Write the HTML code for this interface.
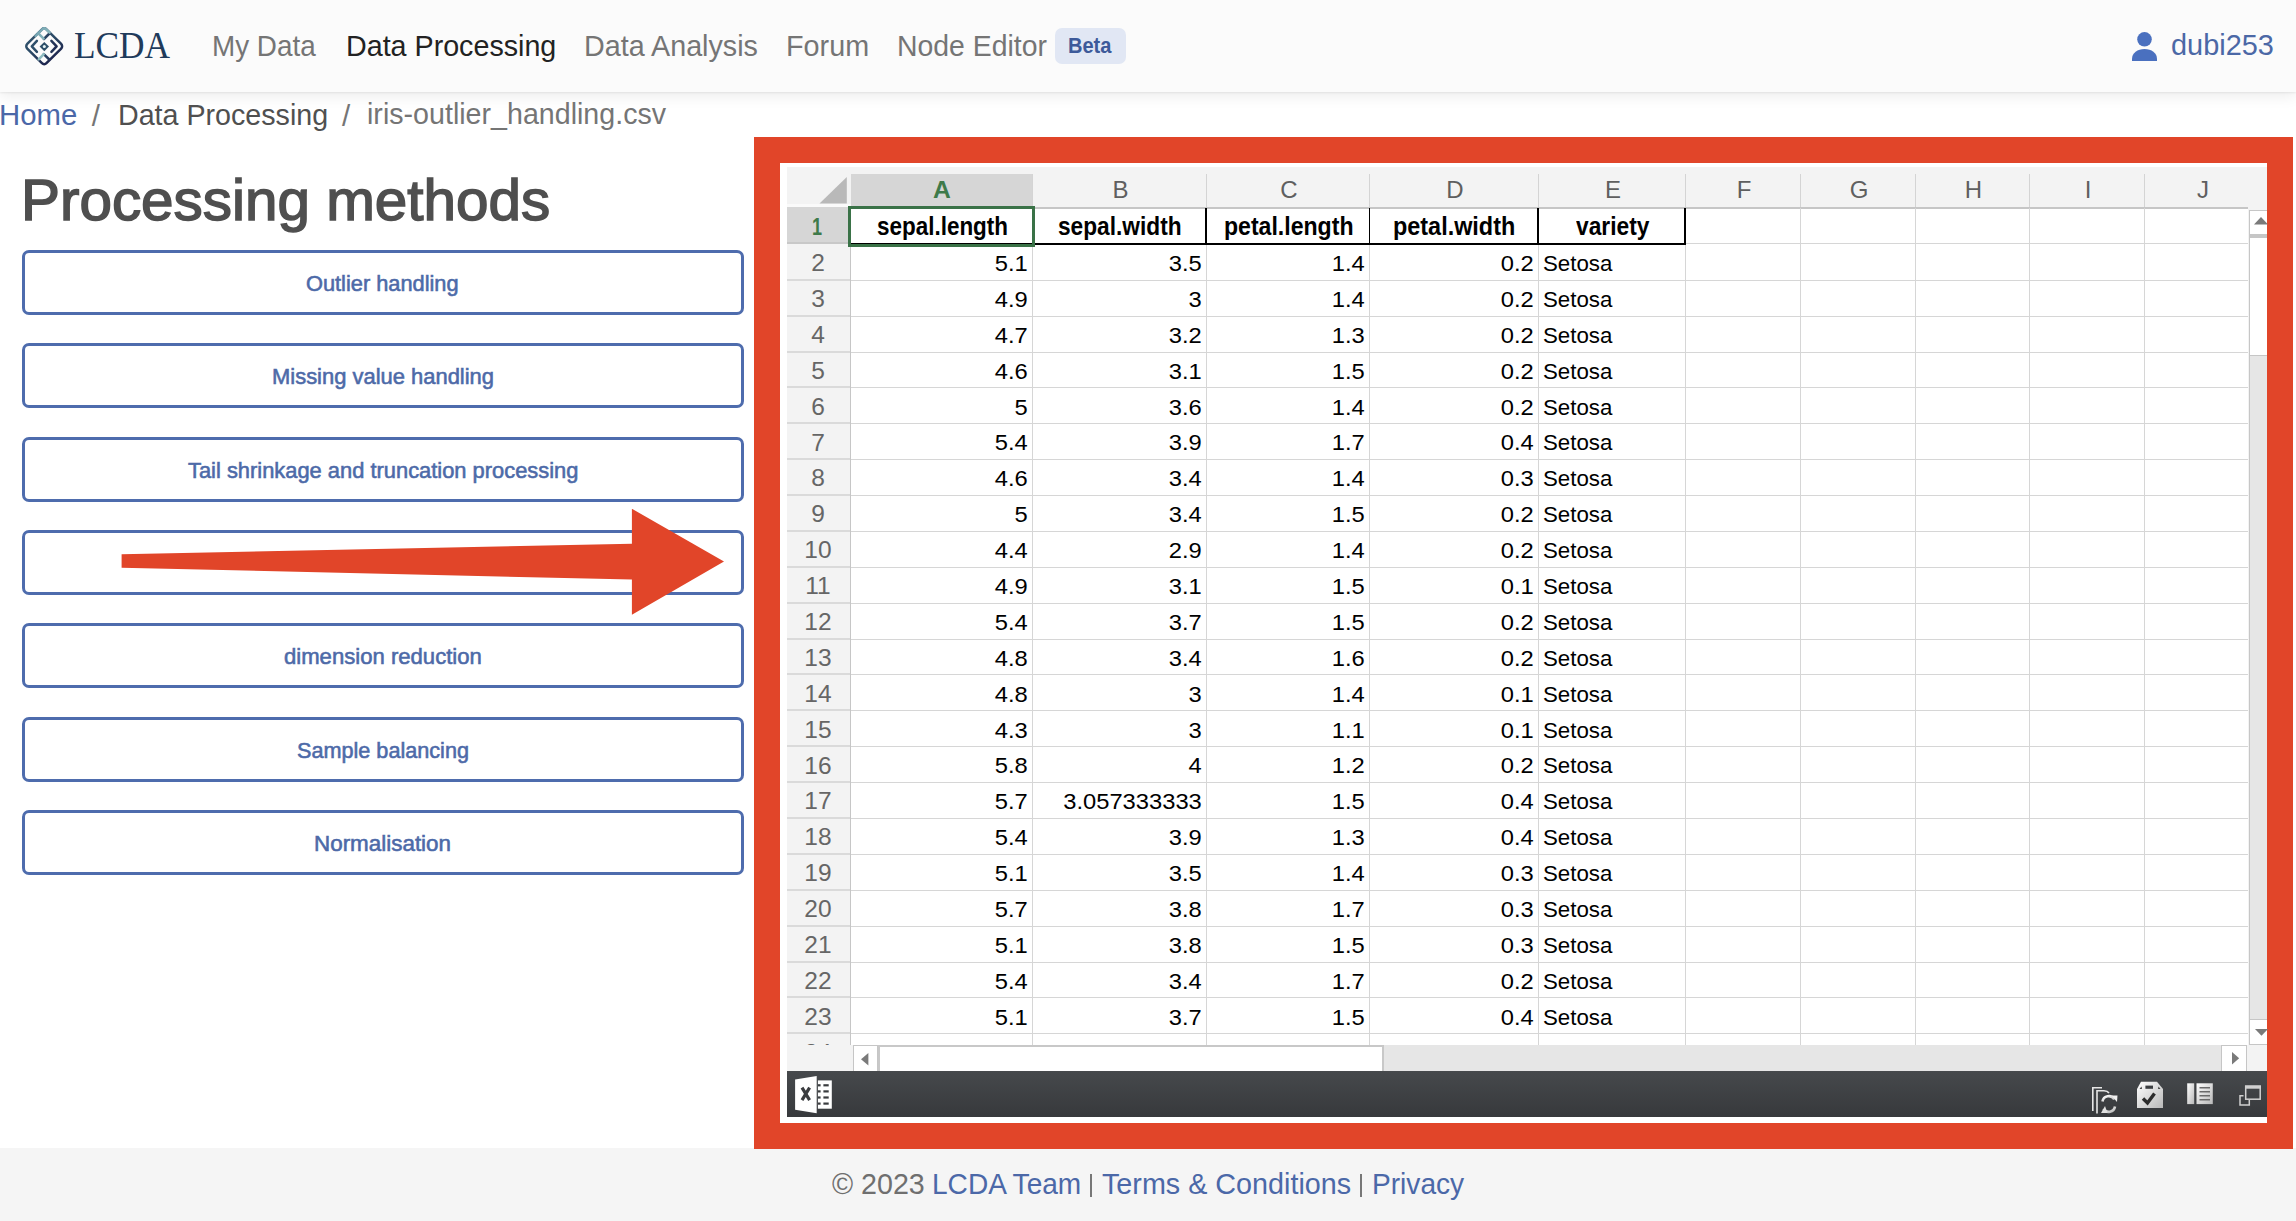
<!DOCTYPE html><html><head><meta charset="utf-8"><style>
*{margin:0;padding:0;box-sizing:border-box}
html,body{width:2296px;height:1221px;overflow:hidden;background:#fff;font-family:"Liberation Sans",sans-serif}
.abs{position:absolute}
.t{position:absolute;white-space:nowrap;line-height:1}
.btn{position:absolute;left:22px;width:721.5px;height:65px;border:3.2px solid #4e6cad;border-radius:7px;background:#fff}
.gl{position:absolute;background:#dcdcdc}
.c{position:absolute;font-size:22.4px;color:#000;line-height:1;white-space:nowrap;text-align:right;transform:scaleX(1.06);transform-origin:100% 0}
.rn{position:absolute;left:786.5px;width:63px;text-align:center;font-size:24.5px;color:#666;line-height:1}
.ch{position:absolute;text-align:center;font-size:24px;color:#5f5f5f;line-height:1}
</style></head><body>
<div class="abs" style="left:0;top:0;width:2296px;height:92px;background:#fbfbfb;box-shadow:0 1px 2px rgba(0,0,0,.07),0 4px 14px rgba(0,0,0,.08)"></div>
<svg class="abs" style="left:20px;top:22px" width="50" height="48" viewBox="0 0 50 48">
<defs><linearGradient id="lg" gradientUnits="userSpaceOnUse" x1="4" y1="20" x2="44" y2="28"><stop offset="0" stop-color="#34566f"/><stop offset="0.45" stop-color="#2b4a66"/><stop offset="1" stop-color="#1a1c48"/></linearGradient>
<linearGradient id="lt" gradientUnits="userSpaceOnUse" x1="14" y1="8" x2="30" y2="16"><stop offset="0" stop-color="#6f9fae"/><stop offset="1" stop-color="#8ebcc0"/></linearGradient></defs>
<g fill="none" stroke="url(#lg)" stroke-width="2.5" stroke-linejoin="round" stroke-linecap="round">
<rect x="10.6" y="10.65" width="27.2" height="27.2" rx="3.2" transform="rotate(45 24.2 24.25)"/>
<path d="M23.9 17 L29.9 11"/>
<path d="M23.8 32.2 L29.3 37.5"/>
<path d="M16.9 18.9 L11.8 24.4 L16.9 29.9"/><path d="M31.4 18.9 L36.6 24.4 L31.4 29.9"/>
</g>
<g fill="none" stroke="url(#lt)" stroke-width="2.5" stroke-linecap="round">
<path d="M15.5 13.8 L22.2 7.3 Q24.2 5.3 26.2 7.3 L29.6 10.7"/>
<path d="M18.1 11.2 L23.6 16.7"/>
<path d="M18.7 37.4 L23.8 32.2"/>
</g>
<path d="M24.3 19.9 L29 24.6 L24.3 29.3 L19.6 24.6 Z" fill="#2e5069"/>
<circle cx="24.3" cy="24.6" r="1.5" fill="#e8f6f8"/>
</svg>
<div class="t" style="left:74.24px;top:27.24px;font-family:'Liberation Serif';font-weight:400;font-size:37.58px;color:#1f3b5b;transform:scaleX(0.9394);transform-origin:0 0;">LCDA</div>
<div class="t" style="left:212.37px;top:30.53px;font-family:'Liberation Sans';font-weight:400;font-size:29.50px;color:#757575;transform:scaleX(0.9434);transform-origin:0 0;">My Data</div>
<div class="t" style="left:345.81px;top:30.53px;font-family:'Liberation Sans';font-weight:400;font-size:29.50px;color:#222;transform:scaleX(0.9717);transform-origin:0 0;">Data Processing</div>
<div class="t" style="left:583.80px;top:30.63px;font-family:'Liberation Sans';font-weight:400;font-size:29.50px;color:#757575;transform:scaleX(0.9730);transform-origin:0 0;">Data Analysis</div>
<div class="t" style="left:786.30px;top:30.63px;font-family:'Liberation Sans';font-weight:400;font-size:29.50px;color:#757575;transform:scaleX(0.9749);transform-origin:0 0;">Forum</div>
<div class="t" style="left:897.03px;top:30.53px;font-family:'Liberation Sans';font-weight:400;font-size:29.50px;color:#757575;transform:scaleX(0.9620);transform-origin:0 0;">Node Editor</div>
<div class="abs" style="left:1055px;top:28px;width:71px;height:36px;background:#e1e7f4;border-radius:7px"></div>
<div class="t" style="left:1068.10px;top:35.41px;font-family:'Liberation Sans';font-weight:700;font-size:21.16px;color:#3d5a9a;transform:scaleX(0.9475);transform-origin:0 0;">Beta</div>
<svg class="abs" style="left:2131px;top:31px" width="27" height="31" viewBox="0 0 27 31">
<circle cx="13.5" cy="8.3" r="7.3" fill="#4a70bf"/><path d="M1 29.9 L1 28 C1 22 6.5 18.1 13.5 18.1 C20.5 18.1 26 22 26 28 L26 29.9 Z" fill="#4a70bf"/></svg>
<div class="t" style="left:2171.44px;top:31.19px;font-family:'Liberation Sans';font-weight:400;font-size:28.60px;color:#4b68a6;transform:scaleX(1.0107);transform-origin:0 0;">dubi253</div>
<div class="t" style="left:-0.55px;top:99.52px;font-family:'Liberation Sans';font-weight:400;font-size:29.50px;color:#4b68a8;transform:scaleX(0.9943);transform-origin:0 0;">Home</div>
<div class="t" style="left:91.80px;top:101.02px;font-family:'Liberation Sans';font-weight:400;font-size:29.50px;color:#757575;">/</div>
<div class="t" style="left:117.61px;top:99.52px;font-family:'Liberation Sans';font-weight:400;font-size:29.50px;color:#505050;transform:scaleX(0.9707);transform-origin:0 0;">Data Processing</div>
<div class="t" style="left:341.90px;top:101.02px;font-family:'Liberation Sans';font-weight:400;font-size:29.50px;color:#757575;">/</div>
<div class="t" style="left:367.30px;top:98.92px;font-family:'Liberation Sans';font-weight:400;font-size:29.50px;color:#757575;transform:scaleX(0.9702);transform-origin:0 0;">iris-outlier_handling.csv</div>
<div class="t" style="left:21.03px;top:171.71px;font-family:'Liberation Sans';font-weight:400;font-size:57.40px;color:#4f4f4f;transform:scaleX(1.0178);transform-origin:0 0;-webkit-text-stroke:1.5px #4f4f4f">Processing methods</div>
<div class="btn" style="top:250.00px"></div>
<div class="t" style="left:306.31px;top:273.08px;font-family:'Liberation Sans';font-weight:400;font-size:21.20px;color:#4d6aa8;transform:scaleX(1.0283);transform-origin:0 0;-webkit-text-stroke:0.55px #4d6aa8">Outlier handling</div>
<div class="btn" style="top:343.33px"></div>
<div class="t" style="left:271.84px;top:366.48px;font-family:'Liberation Sans';font-weight:400;font-size:21.20px;color:#4d6aa8;transform:scaleX(1.0357);transform-origin:0 0;-webkit-text-stroke:0.55px #4d6aa8">Missing value handling</div>
<div class="btn" style="top:436.67px"></div>
<div class="t" style="left:187.76px;top:460.38px;font-family:'Liberation Sans';font-weight:400;font-size:21.20px;color:#4d6aa8;transform:scaleX(1.0326);transform-origin:0 0;-webkit-text-stroke:0.55px #4d6aa8">Tail shrinkage and truncation processing</div>
<div class="btn" style="top:530.00px"></div>
<div class="btn" style="top:623.33px"></div>
<div class="t" style="left:284.12px;top:646.48px;font-family:'Liberation Sans';font-weight:400;font-size:21.20px;color:#4d6aa8;transform:scaleX(1.0432);transform-origin:0 0;-webkit-text-stroke:0.55px #4d6aa8">dimension reduction</div>
<div class="btn" style="top:716.66px"></div>
<div class="t" style="left:296.82px;top:740.08px;font-family:'Liberation Sans';font-weight:400;font-size:21.20px;color:#4d6aa8;transform:scaleX(1.0211);transform-origin:0 0;-webkit-text-stroke:0.55px #4d6aa8">Sample balancing</div>
<div class="btn" style="top:810.00px"></div>
<div class="t" style="left:314.31px;top:833.08px;font-family:'Liberation Sans';font-weight:400;font-size:21.20px;color:#4d6aa8;transform:scaleX(1.0580);transform-origin:0 0;-webkit-text-stroke:0.55px #4d6aa8">Normalisation</div>
<svg class="abs" style="left:0;top:0" width="760" height="700"><polygon fill="#e14529" points="121.6,554.2 631.9,543.8 631.9,508.8 724,561.5 631.9,614.8 631.9,579.6 121.6,567.7"/></svg>
<div class="abs" style="left:0;top:1148px;width:2296px;height:73px;background:#f5f5f5"></div>
<div class="t" style="left:831.53px;top:1168.70px;font-family:'Liberation Sans';font-weight:400;font-size:30.00px;color:#6f6f6f;transform:scaleX(0.9548);transform-origin:0 0;">© 2023</div>
<div class="t" style="left:931.75px;top:1168.70px;font-family:'Liberation Sans';font-weight:400;font-size:30.00px;color:#4b68a8;transform:scaleX(0.9355);transform-origin:0 0;">LCDA Team</div>
<div class="abs" style="left:1089.6px;top:1173.5px;width:2.4px;height:23.5px;background:#777"></div>
<div class="t" style="left:1102.03px;top:1168.70px;font-family:'Liberation Sans';font-weight:400;font-size:30.00px;color:#4b68a8;transform:scaleX(0.9578);transform-origin:0 0;">Terms &amp; Conditions</div>
<div class="abs" style="left:1360.1px;top:1173.5px;width:2.4px;height:23.5px;background:#777"></div>
<div class="t" style="left:1372.15px;top:1168.70px;font-family:'Liberation Sans';font-weight:400;font-size:30.00px;color:#4b68a8;transform:scaleX(0.9373);transform-origin:0 0;">Privacy</div>
<div class="abs" style="left:754px;top:136.5px;width:1539px;height:1012.5px;border:26px solid #e14529;background:#fff"></div>
<div class="abs" style="left:786.5px;top:167px;width:1480px;height:904px;background:#f3f3f3"></div>
<div class="abs" style="left:850.5px;top:208px;width:1397.5px;height:837px;background:#fff"></div>
<svg class="abs" style="left:786px;top:167px" width="64" height="41"><polygon fill="#b9b9b9" points="33.5,36.4 60.8,10 60.8,36.4"/></svg>
<div class="abs" style="left:850.5px;top:174px;width:182px;height:34px;background:#d6d6d6"></div>
<div class="t" style="left:933.46px;top:177.43px;font-family:'Liberation Sans';font-weight:700;font-size:24.20px;color:#3e7a4a;transform:scaleX(1.0204);transform-origin:0 0;margin-top:1px">A</div>
<div class="ch" style="left:1033.5px;width:174.0px;top:177.5px">B</div>
<div class="abs" style="left:1031.9px;top:174px;width:1.2px;height:34px;background:#d4d4d4"></div>
<div class="ch" style="left:1207.5px;width:163.0px;top:177.5px">C</div>
<div class="abs" style="left:1205.9px;top:174px;width:1.2px;height:34px;background:#d4d4d4"></div>
<div class="ch" style="left:1370.5px;width:169.0px;top:177.5px">D</div>
<div class="abs" style="left:1368.9px;top:174px;width:1.2px;height:34px;background:#d4d4d4"></div>
<div class="ch" style="left:1539.5px;width:147.0px;top:177.5px">E</div>
<div class="abs" style="left:1537.9px;top:174px;width:1.2px;height:34px;background:#d4d4d4"></div>
<div class="ch" style="left:1686.5px;width:115.0px;top:177.5px">F</div>
<div class="abs" style="left:1684.9px;top:174px;width:1.2px;height:34px;background:#d4d4d4"></div>
<div class="ch" style="left:1801.5px;width:115.0px;top:177.5px">G</div>
<div class="abs" style="left:1799.9px;top:174px;width:1.2px;height:34px;background:#d4d4d4"></div>
<div class="ch" style="left:1916.5px;width:114.0px;top:177.5px">H</div>
<div class="abs" style="left:1914.9px;top:174px;width:1.2px;height:34px;background:#d4d4d4"></div>
<div class="ch" style="left:2030.5px;width:115.0px;top:177.5px">I</div>
<div class="abs" style="left:2028.9px;top:174px;width:1.2px;height:34px;background:#d4d4d4"></div>
<div class="ch" style="left:2145.5px;width:115.0px;top:177.5px">J</div>
<div class="abs" style="left:2143.9px;top:174px;width:1.2px;height:34px;background:#d4d4d4"></div>
<div class="abs" style="left:850.5px;top:207px;width:1397.5px;height:2px;background:#c6c6c6"></div>
<div class="abs" style="left:786.5px;top:204.3px;width:64px;height:2.6px;background:#fafafa"></div>
<div class="abs" style="left:849.5px;top:208px;width:1.6px;height:837px;background:#c6c6c6"></div>
<div class="abs" style="left:786.5px;top:206.9px;width:63px;height:36.5px;background:#d6d6d6"></div>
<div class="t" style="left:811.71px;top:214.33px;font-family:'Liberation Sans';font-weight:700;font-size:24.20px;color:#3e7a4a;transform:scaleX(0.7472);transform-origin:0 0;margin-top:1px">1</div>
<div class="abs" style="left:786.5px;top:242.4px;width:63px;height:1.8px;background:#c8c8c8"></div>
<div class="gl" style="left:850.5px;top:243px;width:1397.5px;height:1px;background:#d6d6d6"></div>
<div class="gl" style="left:850.5px;top:280px;width:1397.5px;height:1px;background:#d6d6d6"></div>
<div class="gl" style="left:786.5px;top:279.4px;width:63px;height:1.5px;background:#dadada"></div>
<div class="gl" style="left:850.5px;top:316px;width:1397.5px;height:1px;background:#d6d6d6"></div>
<div class="gl" style="left:786.5px;top:315.4px;width:63px;height:1.5px;background:#dadada"></div>
<div class="gl" style="left:850.5px;top:352px;width:1397.5px;height:1px;background:#d6d6d6"></div>
<div class="gl" style="left:786.5px;top:351.4px;width:63px;height:1.5px;background:#dadada"></div>
<div class="gl" style="left:850.5px;top:387px;width:1397.5px;height:1px;background:#d6d6d6"></div>
<div class="gl" style="left:786.5px;top:386.4px;width:63px;height:1.5px;background:#dadada"></div>
<div class="gl" style="left:850.5px;top:423px;width:1397.5px;height:1px;background:#d6d6d6"></div>
<div class="gl" style="left:786.5px;top:422.4px;width:63px;height:1.5px;background:#dadada"></div>
<div class="gl" style="left:850.5px;top:459px;width:1397.5px;height:1px;background:#d6d6d6"></div>
<div class="gl" style="left:786.5px;top:458.4px;width:63px;height:1.5px;background:#dadada"></div>
<div class="gl" style="left:850.5px;top:495px;width:1397.5px;height:1px;background:#d6d6d6"></div>
<div class="gl" style="left:786.5px;top:494.4px;width:63px;height:1.5px;background:#dadada"></div>
<div class="gl" style="left:850.5px;top:531px;width:1397.5px;height:1px;background:#d6d6d6"></div>
<div class="gl" style="left:786.5px;top:530.4px;width:63px;height:1.5px;background:#dadada"></div>
<div class="gl" style="left:850.5px;top:567px;width:1397.5px;height:1px;background:#d6d6d6"></div>
<div class="gl" style="left:786.5px;top:566.4px;width:63px;height:1.5px;background:#dadada"></div>
<div class="gl" style="left:850.5px;top:603px;width:1397.5px;height:1px;background:#d6d6d6"></div>
<div class="gl" style="left:786.5px;top:602.4px;width:63px;height:1.5px;background:#dadada"></div>
<div class="gl" style="left:850.5px;top:639px;width:1397.5px;height:1px;background:#d6d6d6"></div>
<div class="gl" style="left:786.5px;top:638.4px;width:63px;height:1.5px;background:#dadada"></div>
<div class="gl" style="left:850.5px;top:674px;width:1397.5px;height:1px;background:#d6d6d6"></div>
<div class="gl" style="left:786.5px;top:673.4px;width:63px;height:1.5px;background:#dadada"></div>
<div class="gl" style="left:850.5px;top:710px;width:1397.5px;height:1px;background:#d6d6d6"></div>
<div class="gl" style="left:786.5px;top:709.4px;width:63px;height:1.5px;background:#dadada"></div>
<div class="gl" style="left:850.5px;top:746px;width:1397.5px;height:1px;background:#d6d6d6"></div>
<div class="gl" style="left:786.5px;top:745.4px;width:63px;height:1.5px;background:#dadada"></div>
<div class="gl" style="left:850.5px;top:782px;width:1397.5px;height:1px;background:#d6d6d6"></div>
<div class="gl" style="left:786.5px;top:781.4px;width:63px;height:1.5px;background:#dadada"></div>
<div class="gl" style="left:850.5px;top:818px;width:1397.5px;height:1px;background:#d6d6d6"></div>
<div class="gl" style="left:786.5px;top:817.4px;width:63px;height:1.5px;background:#dadada"></div>
<div class="gl" style="left:850.5px;top:854px;width:1397.5px;height:1px;background:#d6d6d6"></div>
<div class="gl" style="left:786.5px;top:853.4px;width:63px;height:1.5px;background:#dadada"></div>
<div class="gl" style="left:850.5px;top:890px;width:1397.5px;height:1px;background:#d6d6d6"></div>
<div class="gl" style="left:786.5px;top:889.4px;width:63px;height:1.5px;background:#dadada"></div>
<div class="gl" style="left:850.5px;top:926px;width:1397.5px;height:1px;background:#d6d6d6"></div>
<div class="gl" style="left:786.5px;top:925.4px;width:63px;height:1.5px;background:#dadada"></div>
<div class="gl" style="left:850.5px;top:962px;width:1397.5px;height:1px;background:#d6d6d6"></div>
<div class="gl" style="left:786.5px;top:961.4px;width:63px;height:1.5px;background:#dadada"></div>
<div class="gl" style="left:850.5px;top:997px;width:1397.5px;height:1px;background:#d6d6d6"></div>
<div class="gl" style="left:786.5px;top:996.4px;width:63px;height:1.5px;background:#dadada"></div>
<div class="gl" style="left:850.5px;top:1033px;width:1397.5px;height:1px;background:#d6d6d6"></div>
<div class="gl" style="left:786.5px;top:1032.4px;width:63px;height:1.5px;background:#dadada"></div>
<div class="gl" style="left:1032px;top:208px;width:1px;height:837px;background:#d6d6d6"></div>
<div class="gl" style="left:1206px;top:208px;width:1px;height:837px;background:#d6d6d6"></div>
<div class="gl" style="left:1369px;top:208px;width:1px;height:837px;background:#d6d6d6"></div>
<div class="gl" style="left:1538px;top:208px;width:1px;height:837px;background:#d6d6d6"></div>
<div class="gl" style="left:1685px;top:208px;width:1px;height:837px;background:#d6d6d6"></div>
<div class="gl" style="left:1800px;top:208px;width:1px;height:837px;background:#d6d6d6"></div>
<div class="gl" style="left:1915px;top:208px;width:1px;height:837px;background:#d6d6d6"></div>
<div class="gl" style="left:2029px;top:208px;width:1px;height:837px;background:#d6d6d6"></div>
<div class="gl" style="left:2144px;top:208px;width:1px;height:837px;background:#d6d6d6"></div>
<div class="abs" style="left:0;top:0;width:2296px;height:1045px;overflow:hidden">
<div class="rn" style="top:251.18px">2</div>
<div class="rn" style="top:287.06px">3</div>
<div class="rn" style="top:322.94px">4</div>
<div class="rn" style="top:358.81px">5</div>
<div class="rn" style="top:394.69px">6</div>
<div class="rn" style="top:430.57px">7</div>
<div class="rn" style="top:466.46px">8</div>
<div class="rn" style="top:502.34px">9</div>
<div class="rn" style="top:538.21px">10</div>
<div class="rn" style="top:574.10px">11</div>
<div class="rn" style="top:609.97px">12</div>
<div class="rn" style="top:645.86px">13</div>
<div class="rn" style="top:681.74px">14</div>
<div class="rn" style="top:717.62px">15</div>
<div class="rn" style="top:753.50px">16</div>
<div class="rn" style="top:789.38px">17</div>
<div class="rn" style="top:825.25px">18</div>
<div class="rn" style="top:861.13px">19</div>
<div class="rn" style="top:897.01px">20</div>
<div class="rn" style="top:932.89px">21</div>
<div class="rn" style="top:968.77px">22</div>
<div class="rn" style="top:1004.65px">23</div>
<div class="rn" style="top:1040.54px">24</div>
</div>
<div class="t" style="left:877.00px;top:214.49px;font-family:'Liberation Sans';font-weight:700;font-size:25.90px;color:#000;transform:scaleX(0.8672);transform-origin:0 0;">sepal.length</div>
<div class="t" style="left:1057.99px;top:214.49px;font-family:'Liberation Sans';font-weight:700;font-size:25.90px;color:#000;transform:scaleX(0.8763);transform-origin:0 0;">sepal.width</div>
<div class="t" style="left:1224.08px;top:214.49px;font-family:'Liberation Sans';font-weight:700;font-size:25.90px;color:#000;transform:scaleX(0.8913);transform-origin:0 0;">petal.length</div>
<div class="t" style="left:1393.36px;top:214.49px;font-family:'Liberation Sans';font-weight:700;font-size:25.90px;color:#000;transform:scaleX(0.9042);transform-origin:0 0;">petal.width</div>
<div class="t" style="left:1575.67px;top:214.49px;font-family:'Liberation Sans';font-weight:700;font-size:25.90px;color:#000;transform:scaleX(0.8793);transform-origin:0 0;">variety</div>
<div class="abs" style="left:850.5px;top:243px;width:835.5px;height:2.2px;background:#000"></div>
<div class="abs" style="left:1205.15px;top:208px;width:1.9px;height:36px;background:#000"></div>
<div class="abs" style="left:1368.55px;top:208px;width:1.9px;height:36px;background:#000"></div>
<div class="abs" style="left:1537.25px;top:208px;width:1.9px;height:36px;background:#000"></div>
<div class="abs" style="left:1684.35px;top:208px;width:1.9px;height:36px;background:#000"></div>
<div class="abs" style="left:848px;top:206px;width:187px;height:40.5px;border:3px solid #3a7247"></div>
<div class="c" style="left:850.5px;width:176.8px;top:253.06px">5.1</div>
<div class="c" style="left:1032.5px;width:168.8px;top:253.06px">3.5</div>
<div class="c" style="left:1206.5px;width:157.8px;top:253.06px">1.4</div>
<div class="c" style="left:1369.5px;width:163.8px;top:253.06px">0.2</div>
<div class="c" style="left:1542.8px;top:253.06px;text-align:left;transform:scaleX(0.995);transform-origin:0 0">Setosa</div>
<div class="c" style="left:850.5px;width:176.8px;top:288.94px">4.9</div>
<div class="c" style="left:1032.5px;width:168.8px;top:288.94px">3</div>
<div class="c" style="left:1206.5px;width:157.8px;top:288.94px">1.4</div>
<div class="c" style="left:1369.5px;width:163.8px;top:288.94px">0.2</div>
<div class="c" style="left:1542.8px;top:288.94px;text-align:left;transform:scaleX(0.995);transform-origin:0 0">Setosa</div>
<div class="c" style="left:850.5px;width:176.8px;top:324.82px">4.7</div>
<div class="c" style="left:1032.5px;width:168.8px;top:324.82px">3.2</div>
<div class="c" style="left:1206.5px;width:157.8px;top:324.82px">1.3</div>
<div class="c" style="left:1369.5px;width:163.8px;top:324.82px">0.2</div>
<div class="c" style="left:1542.8px;top:324.82px;text-align:left;transform:scaleX(0.995);transform-origin:0 0">Setosa</div>
<div class="c" style="left:850.5px;width:176.8px;top:360.70px">4.6</div>
<div class="c" style="left:1032.5px;width:168.8px;top:360.70px">3.1</div>
<div class="c" style="left:1206.5px;width:157.8px;top:360.70px">1.5</div>
<div class="c" style="left:1369.5px;width:163.8px;top:360.70px">0.2</div>
<div class="c" style="left:1542.8px;top:360.70px;text-align:left;transform:scaleX(0.995);transform-origin:0 0">Setosa</div>
<div class="c" style="left:850.5px;width:176.8px;top:396.58px">5</div>
<div class="c" style="left:1032.5px;width:168.8px;top:396.58px">3.6</div>
<div class="c" style="left:1206.5px;width:157.8px;top:396.58px">1.4</div>
<div class="c" style="left:1369.5px;width:163.8px;top:396.58px">0.2</div>
<div class="c" style="left:1542.8px;top:396.58px;text-align:left;transform:scaleX(0.995);transform-origin:0 0">Setosa</div>
<div class="c" style="left:850.5px;width:176.8px;top:432.46px">5.4</div>
<div class="c" style="left:1032.5px;width:168.8px;top:432.46px">3.9</div>
<div class="c" style="left:1206.5px;width:157.8px;top:432.46px">1.7</div>
<div class="c" style="left:1369.5px;width:163.8px;top:432.46px">0.4</div>
<div class="c" style="left:1542.8px;top:432.46px;text-align:left;transform:scaleX(0.995);transform-origin:0 0">Setosa</div>
<div class="c" style="left:850.5px;width:176.8px;top:468.34px">4.6</div>
<div class="c" style="left:1032.5px;width:168.8px;top:468.34px">3.4</div>
<div class="c" style="left:1206.5px;width:157.8px;top:468.34px">1.4</div>
<div class="c" style="left:1369.5px;width:163.8px;top:468.34px">0.3</div>
<div class="c" style="left:1542.8px;top:468.34px;text-align:left;transform:scaleX(0.995);transform-origin:0 0">Setosa</div>
<div class="c" style="left:850.5px;width:176.8px;top:504.22px">5</div>
<div class="c" style="left:1032.5px;width:168.8px;top:504.22px">3.4</div>
<div class="c" style="left:1206.5px;width:157.8px;top:504.22px">1.5</div>
<div class="c" style="left:1369.5px;width:163.8px;top:504.22px">0.2</div>
<div class="c" style="left:1542.8px;top:504.22px;text-align:left;transform:scaleX(0.995);transform-origin:0 0">Setosa</div>
<div class="c" style="left:850.5px;width:176.8px;top:540.10px">4.4</div>
<div class="c" style="left:1032.5px;width:168.8px;top:540.10px">2.9</div>
<div class="c" style="left:1206.5px;width:157.8px;top:540.10px">1.4</div>
<div class="c" style="left:1369.5px;width:163.8px;top:540.10px">0.2</div>
<div class="c" style="left:1542.8px;top:540.10px;text-align:left;transform:scaleX(0.995);transform-origin:0 0">Setosa</div>
<div class="c" style="left:850.5px;width:176.8px;top:575.98px">4.9</div>
<div class="c" style="left:1032.5px;width:168.8px;top:575.98px">3.1</div>
<div class="c" style="left:1206.5px;width:157.8px;top:575.98px">1.5</div>
<div class="c" style="left:1369.5px;width:163.8px;top:575.98px">0.1</div>
<div class="c" style="left:1542.8px;top:575.98px;text-align:left;transform:scaleX(0.995);transform-origin:0 0">Setosa</div>
<div class="c" style="left:850.5px;width:176.8px;top:611.86px">5.4</div>
<div class="c" style="left:1032.5px;width:168.8px;top:611.86px">3.7</div>
<div class="c" style="left:1206.5px;width:157.8px;top:611.86px">1.5</div>
<div class="c" style="left:1369.5px;width:163.8px;top:611.86px">0.2</div>
<div class="c" style="left:1542.8px;top:611.86px;text-align:left;transform:scaleX(0.995);transform-origin:0 0">Setosa</div>
<div class="c" style="left:850.5px;width:176.8px;top:647.74px">4.8</div>
<div class="c" style="left:1032.5px;width:168.8px;top:647.74px">3.4</div>
<div class="c" style="left:1206.5px;width:157.8px;top:647.74px">1.6</div>
<div class="c" style="left:1369.5px;width:163.8px;top:647.74px">0.2</div>
<div class="c" style="left:1542.8px;top:647.74px;text-align:left;transform:scaleX(0.995);transform-origin:0 0">Setosa</div>
<div class="c" style="left:850.5px;width:176.8px;top:683.62px">4.8</div>
<div class="c" style="left:1032.5px;width:168.8px;top:683.62px">3</div>
<div class="c" style="left:1206.5px;width:157.8px;top:683.62px">1.4</div>
<div class="c" style="left:1369.5px;width:163.8px;top:683.62px">0.1</div>
<div class="c" style="left:1542.8px;top:683.62px;text-align:left;transform:scaleX(0.995);transform-origin:0 0">Setosa</div>
<div class="c" style="left:850.5px;width:176.8px;top:719.50px">4.3</div>
<div class="c" style="left:1032.5px;width:168.8px;top:719.50px">3</div>
<div class="c" style="left:1206.5px;width:157.8px;top:719.50px">1.1</div>
<div class="c" style="left:1369.5px;width:163.8px;top:719.50px">0.1</div>
<div class="c" style="left:1542.8px;top:719.50px;text-align:left;transform:scaleX(0.995);transform-origin:0 0">Setosa</div>
<div class="c" style="left:850.5px;width:176.8px;top:755.38px">5.8</div>
<div class="c" style="left:1032.5px;width:168.8px;top:755.38px">4</div>
<div class="c" style="left:1206.5px;width:157.8px;top:755.38px">1.2</div>
<div class="c" style="left:1369.5px;width:163.8px;top:755.38px">0.2</div>
<div class="c" style="left:1542.8px;top:755.38px;text-align:left;transform:scaleX(0.995);transform-origin:0 0">Setosa</div>
<div class="c" style="left:850.5px;width:176.8px;top:791.26px">5.7</div>
<div class="c" style="left:1032.5px;width:168.8px;top:791.26px">3.057333333</div>
<div class="c" style="left:1206.5px;width:157.8px;top:791.26px">1.5</div>
<div class="c" style="left:1369.5px;width:163.8px;top:791.26px">0.4</div>
<div class="c" style="left:1542.8px;top:791.26px;text-align:left;transform:scaleX(0.995);transform-origin:0 0">Setosa</div>
<div class="c" style="left:850.5px;width:176.8px;top:827.14px">5.4</div>
<div class="c" style="left:1032.5px;width:168.8px;top:827.14px">3.9</div>
<div class="c" style="left:1206.5px;width:157.8px;top:827.14px">1.3</div>
<div class="c" style="left:1369.5px;width:163.8px;top:827.14px">0.4</div>
<div class="c" style="left:1542.8px;top:827.14px;text-align:left;transform:scaleX(0.995);transform-origin:0 0">Setosa</div>
<div class="c" style="left:850.5px;width:176.8px;top:863.02px">5.1</div>
<div class="c" style="left:1032.5px;width:168.8px;top:863.02px">3.5</div>
<div class="c" style="left:1206.5px;width:157.8px;top:863.02px">1.4</div>
<div class="c" style="left:1369.5px;width:163.8px;top:863.02px">0.3</div>
<div class="c" style="left:1542.8px;top:863.02px;text-align:left;transform:scaleX(0.995);transform-origin:0 0">Setosa</div>
<div class="c" style="left:850.5px;width:176.8px;top:898.90px">5.7</div>
<div class="c" style="left:1032.5px;width:168.8px;top:898.90px">3.8</div>
<div class="c" style="left:1206.5px;width:157.8px;top:898.90px">1.7</div>
<div class="c" style="left:1369.5px;width:163.8px;top:898.90px">0.3</div>
<div class="c" style="left:1542.8px;top:898.90px;text-align:left;transform:scaleX(0.995);transform-origin:0 0">Setosa</div>
<div class="c" style="left:850.5px;width:176.8px;top:934.78px">5.1</div>
<div class="c" style="left:1032.5px;width:168.8px;top:934.78px">3.8</div>
<div class="c" style="left:1206.5px;width:157.8px;top:934.78px">1.5</div>
<div class="c" style="left:1369.5px;width:163.8px;top:934.78px">0.3</div>
<div class="c" style="left:1542.8px;top:934.78px;text-align:left;transform:scaleX(0.995);transform-origin:0 0">Setosa</div>
<div class="c" style="left:850.5px;width:176.8px;top:970.66px">5.4</div>
<div class="c" style="left:1032.5px;width:168.8px;top:970.66px">3.4</div>
<div class="c" style="left:1206.5px;width:157.8px;top:970.66px">1.7</div>
<div class="c" style="left:1369.5px;width:163.8px;top:970.66px">0.2</div>
<div class="c" style="left:1542.8px;top:970.66px;text-align:left;transform:scaleX(0.995);transform-origin:0 0">Setosa</div>
<div class="c" style="left:850.5px;width:176.8px;top:1006.54px">5.1</div>
<div class="c" style="left:1032.5px;width:168.8px;top:1006.54px">3.7</div>
<div class="c" style="left:1206.5px;width:157.8px;top:1006.54px">1.5</div>
<div class="c" style="left:1369.5px;width:163.8px;top:1006.54px">0.4</div>
<div class="c" style="left:1542.8px;top:1006.54px;text-align:left;transform:scaleX(0.995);transform-origin:0 0">Setosa</div>
<div class="abs" style="left:2248.5px;top:209.5px;width:18px;height:835px;background:#e6e6e6;border-left:1.3px solid #c6c6c6"></div>
<div class="abs" style="left:2248.5px;top:209.5px;width:18px;height:25.5px;background:#fff;border:1.3px solid #c6c6c6;border-right:0"></div>
<svg class="abs" style="left:2254px;top:217px" width="14" height="8"><polygon fill="#7a7a7a" points="0,7.5 7,0 14,7.5"/></svg>
<div class="abs" style="left:2248.5px;top:234.7px;width:18px;height:121px;background:#fff;border:1.3px solid #c6c6c6;border-top:3px solid #c6c6c6;border-right:0"></div>
<div class="abs" style="left:2248.5px;top:1018.8px;width:18px;height:26px;background:#fff;border:1.3px solid #c6c6c6;border-right:0"></div>
<svg class="abs" style="left:2254.5px;top:1029.3px" width="14" height="8"><polygon fill="#7a7a7a" points="0,0 13,0 6.5,6.8"/></svg>
<div class="abs" style="left:853px;top:1044.7px;width:1393.5px;height:26.3px;background:#e6e6e6"></div>
<div class="abs" style="left:853px;top:1044.7px;width:25px;height:26.3px;background:#fff;border:1.3px solid #c6c6c6;border-bottom:0"></div>
<svg class="abs" style="left:861px;top:1052.5px" width="8" height="13"><polygon fill="#7a7a7a" points="7.4,0 7.4,12.5 0,6.25"/></svg>
<div class="abs" style="left:877.6px;top:1044.7px;width:506px;height:26.3px;background:#fff;border-top:2.3px solid #c8c8c8;border-left:2.5px solid #c8c8c8;border-right:2px solid #c8c8c8"></div>
<div class="abs" style="left:2221px;top:1044.7px;width:25.5px;height:26.3px;background:#fff;border:1.3px solid #c6c6c6;border-bottom:0"></div>
<svg class="abs" style="left:2231.8px;top:1052.4px" width="8" height="13"><polygon fill="#7a7a7a" points="0,0 7.2,6.25 0,12.5"/></svg>
<div class="abs" style="left:2246.5px;top:1044.7px;width:20px;height:26.3px;background:#f3f3f3"></div>
<div class="abs" style="left:786.5px;top:1071px;width:1480px;height:46px;background:linear-gradient(#46494c,#37393c)"></div>
<svg class="abs" style="left:788px;top:1070px" width="52" height="48" viewBox="0 0 52 48">
<path d="M7.1 9.4 L28.7 6.1 L28.7 43.2 L7.1 39.7 Z" fill="#fff"/>
<rect x="29.9" y="10.4" width="13.9" height="28.3" fill="#fff"/>
<g fill="#3a3c3f">
<rect x="29.9" y="14.2" width="2.7" height="2.2"/><rect x="35.4" y="14.2" width="5.3" height="2.2"/>
<rect x="29.9" y="20.3" width="2.7" height="2.2"/><rect x="35.4" y="20.3" width="5.3" height="2.2"/>
<rect x="29.9" y="26.4" width="2.7" height="2.2"/><rect x="35.4" y="26.4" width="5.3" height="2.2"/>
<rect x="29.9" y="32.5" width="2.7" height="2.2"/><rect x="35.4" y="32.5" width="5.3" height="2.2"/>
</g>
<path d="M14 17.6 L21.6 30.1 M21.6 17.6 L14 30.1" stroke="#3a3c3f" stroke-width="3.2" fill="none"/>
</svg>
<svg class="abs" style="left:2090px;top:1080px" width="176" height="36" viewBox="0 0 176 36">
<defs><linearGradient id="ig" x1="0" y1="0" x2="1" y2="1"><stop offset="0" stop-color="#ffffff"/><stop offset="1" stop-color="#b8b8b8"/></linearGradient></defs>
<g fill="none" stroke="#e6e6e6" stroke-width="1.6">
<path d="M2.8 31 L2.8 7.8 L12 7.8"/><path d="M7 33.5 L7 10.8 L14 10.8 Q17.5 10.8 19 13"/>
</g>
<g fill="none" stroke="url(#ig)" stroke-width="2.6">
<path d="M12.5 21.5 A6.3 6.3 0 0 1 24.3 19.5"/><path d="M25 26.5 A6.3 6.3 0 0 1 13.5 29"/>
</g>
<path d="M21.5 15.5 L27.5 15.5 L27 22 Z" fill="#f0f0f0"/><path d="M11 33 L17.5 33 L15 26 Z" fill="#e0e0e0"/>
<path d="M47 9 L51 1.8 L67 1.8 L73 9 L73 28 L47 28 Z" fill="url(#ig)"/>
<rect x="55.4" y="5.6" width="7.6" height="3.2" fill="#3b3d40"/>
<path d="M49.5 9 L51.5 6.5 L52 9 Z M70.5 9 L68.5 6.5 L68 9 Z" fill="#444"/>
<path d="M53 18.5 L57.5 23 L64.5 13.5" fill="none" stroke="#2b2b2b" stroke-width="3.4"/>
<rect x="97.2" y="3.3" width="7" height="20.8" fill="url(#ig)"/><rect x="106.5" y="3.3" width="16.3" height="20.8" fill="url(#ig)"/>
<g fill="#6a6a6a"><rect x="109.5" y="7" width="10.5" height="1.5"/><rect x="109.5" y="11" width="10.5" height="1.5"/><rect x="109.5" y="15" width="10.5" height="1.5"/><rect x="109.5" y="19" width="10.5" height="1.5"/></g>
<g fill="none" stroke="#d0d0d0" stroke-width="1.5"><rect x="155.7" y="6.2" width="14.5" height="13"/><path d="M153.5 15.8 L150 15.8 L150 24.9 L159.3 24.9 L159.3 20"/></g>
<rect x="155" y="5.5" width="16" height="3.2" fill="#d0d0d0"/>
</svg>
</body></html>
